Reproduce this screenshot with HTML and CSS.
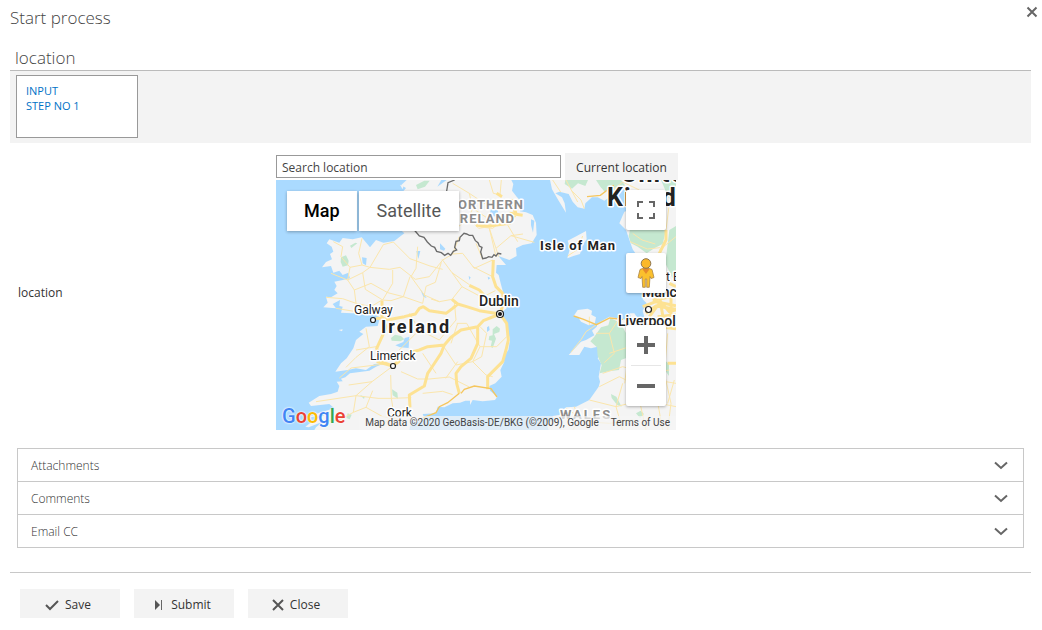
FILE: index.html
```html
<!DOCTYPE html>
<html lang="en">
<head>
<meta charset="utf-8">
<title>Start process</title>
<link rel="stylesheet" href="styles.css">
</head>
<body>
<main class="dialog">
  <header class="dialog-head">
    <h1 class="dialog-title">Start process</h1>
    <button class="dismiss" type="button" aria-label="Dismiss">
      <svg width="12" height="12" viewBox="0 0 12 12"><path d="M1.5 1.500l9 9M10.500 1.500l-9 9" stroke="#666" stroke-width="2"/></svg>
    </button>
  </header>

  <h2 class="section-title">location</h2>
  <div class="steps">
    <a class="step" href="#step-1">INPUT<br>STEP NO 1</a>
  </div>

  <section class="field">
    <label class="field-label" for="search">location</label>
    <div class="field-body">
      <div class="search-row">
        <input class="search" id="search" type="text" value="Search location">
        <button class="current" type="button">Current location</button>
      </div>
      <div class="map">
        <svg class="map-canvas" viewBox="0 0 400 250" role="img" aria-label="Map of Ireland">
          <svg width="400" height="250" viewBox="0 0 1200 750">
            <rect width="1200" height="750" fill="#aadaff"/>
            <g fill="#f4f4f4">
              <path d="M392 0L375 16 390 24 368 50 372 148 385 160 355 183 322 188 300 180 282 202 257 172 230 178 200 174 190 188 160 178 152 190 167 200 172 215 162 222 168 238 150 246 138 262 165 258 172 278 190 272 200 285 217 278 222 295 200 300 175 305 182 318 175 330 185 340 165 352 150 350 155 368 142 382 180 385 170 372 192 360 190 378 200 380 195 398 230 400 285 400 312 412 305 438 270 440 250 455 262 462 240 480 232 505 212 535 195 550 178 575 215 570 240 565 270 570 295 552 325 550 300 560 280 572 222 580 208 592 195 596 200 604 182 605 190 618 185 635 165 642 130 648 98 668 105 678 160 672 175 685 130 698 93 714 150 703 112 722 88 740 98 742 140 725 120 742 115 750H400L405 722 425 725 445 715 440 702 480 700 485 680 505 682 530 670 552 668 568 662 582 662 582 675 590 660 620 664 657 660 664 650 642 632 640 618 658 610 677 590 673 570 685 545 680 535 697 510 702 480 694 440 682 415 672 402 692 385 680 365 682 340 674 310 668 285 660 278 662 255 690 255 667 228 700 240 722 228 720 205 740 195 767 190 782 165 780 128 770 105 750 97 732 94 740 70 722 50 708 32 712 12 706 0Z"/>
              <path d="M822 0L828 28 848 62 870 98 866 70 858 52 838 40 850 35 878 42 890 65 905 82 925 86 928 70 948 52 965 52 985 62 1010 45 1035 22 1055 35 1060 90 1045 95 1030 130 1050 150 1062 185 1070 208 1085 230 1085 320 1105 340 1100 358 1112 370 1100 392 1105 412 1085 415 1075 400 1060 400 1070 420 1040 418 1000 410 965 430 962 440 948 452 955 466 930 480 915 485 878 525 910 525 925 500 945 505 965 500 973 520 965 535 975 550 968 590 972 605 968 620 940 660 900 680 870 682 850 705 830 708 835 724 810 725 818 750H1200V0Z"/>
              <path d="M893 408L905 390 935 386 948 392 946 404 960 412 956 432 938 436 915 425 908 413ZM874 235L882 205 875 182 898 170 930 153 932 178 920 195 912 222 892 228ZM188 450L200 448 198 454ZM372 14l10 4-2 10z"/>
            </g>
            <g fill="#c5e8d0">
              <path d="M420 15L445 2h16l-14 18-22 8zM195 232l15-6 8 16-2 14-16 4-6-14zM222 197l16-9 6 2-18 14zM345 474l12-10 18 4 10 10-12 6-26-2zM252 645l14 5-2 7zM348 628l16 10 2 18-16-10zM215 700l12 4-6 14-10-4zM650 448l12-10 10 8-2 10-16 6 6 14-10 28-6-4 4-18-10-2 2-12 10-2zM640 60l16-4 10 6-12 10z"/>
              <path d="M868 0h68l-8 18-22-8-18 16-22-14zM960 0h75l12 16-28 18-14-10-18 12-14-16zM1062 150H1170L1160 192 1135 205 1112 220 1085 200 1065 190 1058 168ZM1180 150l20-12V300l-12-8-20-42zM955 470l20-28 22-6 6-22 30 14 22 40 20 30-14 32-26 10-6 30-30 4-28 6 6-24-12-28-2-26-20-18zM1005 642l16 8 16 30-14-6-16-20zM1080 700l14-8 10 10-12 12zM1165 540l14 12v36l-14-20zM1155 0h45v70l-22-16zM1075 150l20 12h-24z"/>
            </g>
            <g fill="#aadaff">
              <path d="M400 470l-2 34-26-2-14-6 24-10 4-12zM421 213h12l-6 24zM492 190l16 16-4 6-12-4zM432 326l20 28-10-4zM258 232l14 2-2 22-10-6zM633 442l6-4 2 12-8 6zM645 86h20l2 18-18 8-8-10zM484 20l28-20h-16zM765 118l10 4-4 36-6-22zM578 288l6 4-4 8zM282 404h20l-6 12zM635 290l8 4-6 5z"/>
            </g>
            <g class="minor-roads">
              <path d="M165 280L215 300 260 278 282 262 340 268 372 262 418 298 460 290 500 240 530 222M172 185L200 200 195 230 222 262 215 300 235 330 240 370 285 380 318 360 345 362 382 350 440 370 445 345 405 290 420 265 425 200M258 175l-10 45 10 35 24 7 40-68 30-8 50 50 60 22 38 10M222 262l36-7M260 278l8 50 52 32 30-50 0-40M235 330l50-20 50 28 47 12 20-60M150 352l50 4 40 14M180 385l60 10 60 5M445 345l5-26 28-12 18-60M445 345l45 20 38-7 30-38M558 320l-30-42-30-40M528 278l52 36M558 320l60 32 40-20M490 365l-25-8M400 400l30 50-60 60M430 450l60 30 50-60-5-55M270 445l10 55-40 32-30 30M300 500l-60 10M325 552l-100 12-35 30M348 560l-60 45-70 10M288 605l-48 42-120 18M240 647l-8 50-40 22-50 6M240 647l66 8 40 0-2-70M346 655l8 50-40 35M346 655l60-2M270 682l50 28 60 10M232 697l38-15 20-50M375 575l50 22 35 0M440 520l40 60M500 495l40 60 50-10 22-45-40-70-30 0M545 430l-20 60M460 597l60-6 60 30M440 640l60-6 30 10M545 545l-36 50M590 545l40 40 20 5M612 440l20 20-15 70-27 15M612 500l50 0 30-30M650 240l-55 25-35-45-30 2M620 238l-20-48M530 222l20-52M650 290l-60-30M530 10l50 30 10 45-12 30 30 30 38-6M580 40l60 40M640 0l12 40 24 5M676 0l-4 45M700 105l-50 40-36-4M640 145l20 60 8 25M590 85l60 40M555 80l35 5M660 205l45-38 36-5M720 75l-25 60 30 50M705 167l70 20M660 230l-20-85M580 115l-40 30"/>
              <path d="M830 0l24 36M870 0l35 66M925 86l-10-26-30-30M1010 30l30-24 50 24M1070 160l28 20 40 12M1062 185l52 22 38-4M1150 210l50-40M1170 150l10-80M940 410l0 25M960 435l-30 20-15 24-30 38M960 460l40 0 30-45M1000 460l15 60-30 28M1000 520l60-20 60 20M1050 430l6 100-10 80M980 580l60-20 70 20 70-10M970 620l60-30 60 30 50-20 60 10M940 660l80 20 80-20 100 20M1040 610l-20 70 20 70M1100 580l-10 80 20 90M1150 560l-10 80 20 110M895 680l15 40-20 30M870 685l60 40 70 5 70-10M1175 460l-10 120 20 90-10 80M1195 600l-20 70M1056 500l40-60M875 228l30-20 15-40"/>
            </g>
            <g class="major-roads">
              <path d="M300 415L345 418 385 410 418 402 430 385 442 380 460 392 510 400 530 385 545 372 572 380 610 392 672 402M318 412L330 440 325 455 302 505 315 545 350 558M350 558L375 538 400 518 430 510 455 500 505 495 525 472 555 450 605 440 622 422 672 402M505 495L495 520 470 558 455 580 445 618 400 645 402 682M605 440L605 490 585 535 555 560 540 580 542 610 550 640M672 402L692 430 697 480 690 510 680 545 650 575 635 590 635 628M672 402L682 370 680 340 660 320 650 290 652 240M545 372L528 358M580 316l30 14 18 20M318 412l0-50M302 545l48 13 20-14M720 100l-20 30-60 8-40-2M720 100l-12-30 2-12M700 100l40 6M662 40l16 10"/>
              <path d="M1100 380l40-15 60 12M1110 400l30-22 60 10M1120 410l34-45 26 30 20-5M1150 345l10 60M1185 350v60M1130 360l70-12M1170 150l0 30-20 40M1150 440l50 6M1175 550h25M1180 310l20 10M1145 410l55-6"/>
            </g>
            <path d="M893 408l30 10 38 16 40-20 40 4M555 640l10-12 30-10 50 8 18 25M550 640l-35 28-25 12-10 18-40 16M933 50l40-4 40-30" fill="none" stroke="#f5c65d" stroke-width="4"/>
            <path d="M536 0l-20 8-4 25M415 150l15 18 14 4 10 14 12 12 10 4 6 12 14 4 10 8 10-6 8 6 8-12 10-4-6-8 4-18 10-2 2-10 12-12 8 2 8 4 10 0 8 16 8 6 4 10 8 4-4 14 6 20 10-2 8-4 10 2 6-8 6 4 6-8 10 2" fill="none" stroke="#6b6b6b" stroke-width="4"/>
          </svg>
          <g class="places">
            <g class="muted" text-anchor="end"><text x="248" y="29">NORTHERN</text><text x="239" y="43">IRELAND</text></g>
            <text class="muted wide" x="284" y="239">WALES</text>
            <text class="kingdom" x="345" y="2">United</text><text class="kingdom" x="331" y="26">Kingdom</text>
            <text class="isle" x="264" y="70">Isle of Man</text>
            <text class="country" x="105" y="153">Ireland</text>
            <text class="town" x="78" y="134">Galway</text><text class="town" x="94" y="180">Limerick</text>
            <text class="town" x="111" y="237">Cork</text><text class="town" x="390" y="101">t Britain</text>
            <text class="city" x="203" y="126">Dublin</text><text class="city" x="366" y="117">Manchester</text><text class="city" x="342" y="146">Liverpool</text>
          </g>
          <g fill="#fff" stroke="#222" stroke-width="1.2"><circle cx="97" cy="140" r="2.5"/><circle cx="117" cy="186" r="2.5"/><circle cx="372.500" cy="129.500" r="3"/><circle cx="224" cy="134" r="3.500"/></g>
          <circle cx="224" cy="134" r="2" fill="#111"/>
        </svg>
        <div class="map-types"><button class="type selected" type="button">Map</button><button class="type" type="button">Satellite</button></div>
        <button class="tile fullscreen" type="button" aria-label="Toggle fullscreen">
          <svg width="18" height="18" viewBox="0 0 18 18"><path d="M1 6V1h5M12 1h5v5M17 12v5h-5M6 17H1v-5" fill="none" stroke="#666" stroke-width="2"/></svg>
        </button>
        <button class="tile pegman" type="button" aria-label="Street View">
          <svg width="18" height="30" viewBox="0 0 18 30"><path d="M5.500 10.500h7l2.500 1 2 8-3 1-1-2-.7 10.800H9.700V21H8.300v8.300H5.700L5 18.500l-1 2-3-1 2-8z" fill="#fbc02d" stroke="#a9854a" stroke-width=".8"/><path d="M5 10.500h8l-4 5.500z" fill="#e58a2b"/><circle cx="9" cy="5.500" r="4.800" fill="#fbb829" stroke="#8c7551"/></svg>
        </button>
        <div class="zoom">
          <button class="zoom-button" type="button" aria-label="Zoom in"><svg width="18" height="18" viewBox="0 0 18 18"><path d="M0 9h18M9 0v18" stroke="#666" stroke-width="4"/></svg></button>
          <button class="zoom-button" type="button" aria-label="Zoom out"><svg width="18" height="18" viewBox="0 0 18 18"><path d="M0 9h18" stroke="#666" stroke-width="4"/></svg></button>
        </div>
        <a class="brand" href="#maps"><span class="blue">G</span><span class="red">o</span><span class="yellow">o</span><span class="blue">g</span><span class="green">l</span><span class="red">e</span></a>
        <div class="credits"><span>Map data ©2020 GeoBasis-DE/BKG (©2009), Google</span><a href="#terms">Terms of Use</a></div>
      </div>
    </div>
  </section>

  <div class="panels">
    <button class="panel" type="button">Attachments<svg width="14" height="9" viewBox="0 0 14 9"><path d="M1 1.500l6 5.500 6-5.500" fill="none" stroke="#666" stroke-width="2"/></svg></button>
    <button class="panel" type="button">Comments<svg width="14" height="9" viewBox="0 0 14 9"><path d="M1 1.500l6 5.500 6-5.500" fill="none" stroke="#666" stroke-width="2"/></svg></button>
    <button class="panel" type="button">Email CC<svg width="14" height="9" viewBox="0 0 14 9"><path d="M1 1.500l6 5.500 6-5.500" fill="none" stroke="#666" stroke-width="2"/></svg></button>
  </div>

  <footer class="actions">
    <button class="action" type="button"><svg width="14" height="12" viewBox="0 0 14 12"><path d="M1 6l4 4 8-8" fill="none" stroke="#555" stroke-width="2"/></svg>Save</button>
    <button class="action" type="button"><svg width="12" height="12" viewBox="0 0 12 12"><path d="M2 1l5 5-5 5z" fill="#555"/><path d="M8.500 1v10" stroke="#666"/></svg>Submit</button>
    <button class="action" type="button"><svg width="12" height="12" viewBox="0 0 12 12"><path d="M1 1l10 10M11 1L1 11" stroke="#555" stroke-width="2"/></svg>Close</button>
  </footer>
</main>
</body>
</html>
```
FILE: styles.css
```css
* { box-sizing: border-box; }
body {
  margin: 0;
  background: #fff;
  color: #333;
  font: 12px/16px "Open Sans", "Noto Sans", sans-serif;
}
button { border: 0; margin: 0; padding: 0; color: inherit; font: inherit; cursor: pointer; }
svg { display: block; flex: none; }
a { color: inherit; text-decoration: none; }
.dialog { padding: 6px 11px 0 10px; }
.dialog-head { display: flex; justify-content: space-between; align-items: flex-start; margin-right: -7px; }
.dialog-title, .section-title { margin: 0; color: #444; font-weight: 300; font-size: 17px; line-height: 24px; }
.dismiss { display: flex; background: none; }
.section-title { padding: 16px 5px 0; border-bottom: 1px solid #bbb; }
.steps { padding: 4px 6px 5px; background: #f3f3f3; }
.step {
  display: block;
  width: 122px;
  height: 63px;
  padding: 7px 9px;
  border: 1px solid #999;
  background: #fff;
  color: #0072c6;
  font-size: 11px;
  line-height: 15px;
}
.field { display: flex; align-items: center; padding: 10px 8px 18px; }
.field-label { flex: 0 0 258px; padding-top: 2px; }
.field-body { width: 402px; }
.search-row { display: flex; gap: 4px; align-items: center; height: 27px; }
.search {
  flex: 1;
  min-width: 0;
  height: 23px;
  padding: 2px 5px 0;
  border: 1px solid #999;
  color: #444;
  font: inherit;
}
.current { flex: 0 0 113px; height: 27px; padding-top: 2px; background: #f3f3f3; }
.map { position: relative; width: 400px; overflow: hidden; font-family: Roboto, sans-serif; }
.map-canvas { width: 100%; }
.minor-roads { fill: none; stroke: #fbe6ac; stroke-width: 3; stroke-linejoin: round; }
.major-roads { fill: none; stroke: #fde293; stroke-width: 9; stroke-linejoin: round; }
.places { fill: #222; stroke: #fff; stroke-width: 3px; stroke-linejoin: round; paint-order: stroke; }
.muted { fill: #8c8c8c; font-size: 13px; font-weight: 700; letter-spacing: 1px; }
.wide { letter-spacing: 2px; }
.kingdom { font-size: 25px; font-weight: 700; letter-spacing: 1px; }
.isle { font-size: 13px; font-weight: 700; letter-spacing: 1px; }
.country { font-size: 18px; font-weight: 700; letter-spacing: 2px; }
.town { font-size: 12px; }
.city { font-size: 14px; font-weight: 500; }
.map-types { position: absolute; top: 11px; left: 11px; display: flex; gap: 2px; }
.type {
  height: 40px;
  padding: 0 18px;
  background: #fff;
  box-shadow: 0 1px 3px rgba(0, 0, 0, .3);
  color: #565656;
  font-size: 18px;
}
.selected { padding: 0 17px; color: #000; font-weight: 500; }
.tile, .zoom { position: absolute; right: 10px; width: 40px; border-radius: 2px; background: #fff; box-shadow: 0 1px 3px rgba(0, 0, 0, .3); }
.tile { display: flex; justify-content: center; align-items: center; height: 40px; }
.fullscreen { top: 10px; }
.pegman { top: 73px; }
.zoom { bottom: 24px; }
.zoom-button { display: flex; justify-content: center; align-items: center; width: 30px; height: 40px; margin: 0 5px; background: none; }
.zoom-button + .zoom-button { height: 41px; border-top: 1px solid #e6e6e6; }
.brand { position: absolute; left: 6px; bottom: 2px; font-size: 20px; font-weight: 500; line-height: 24px; text-shadow: 0 0 2px #fff, 0 0 2px #fff; }
.blue { color: #4285f4; }
.red { color: #ea4335; }
.yellow { color: #fbbc05; }
.green { color: #34a853; }
.credits { position: absolute; right: 0; bottom: 0; display: flex; gap: 12px; padding: 0 6px; background: rgba(245, 245, 245, .7); color: #444; font-size: 10px; line-height: 14px; white-space: nowrap; }
.panels { margin: 0 7px 24px; border: 1px solid #c8c8c8; }
.panel { display: flex; justify-content: space-between; align-items: center; width: 100%; height: 32px; padding: 1px 15px 0 13px; background: #fff; font-weight: 300; }
.panel + .panel { height: 33px; border-top: 1px solid #c8c8c8; }
.actions { display: flex; gap: 14px; padding: 16px 10px 12px; border-top: 1px solid #c8c8c8; }
.action { display: flex; justify-content: center; align-items: center; gap: 6px; width: 100px; height: 29px; padding: 2px 4px 0 0; background: #f3f3f3; }
```
